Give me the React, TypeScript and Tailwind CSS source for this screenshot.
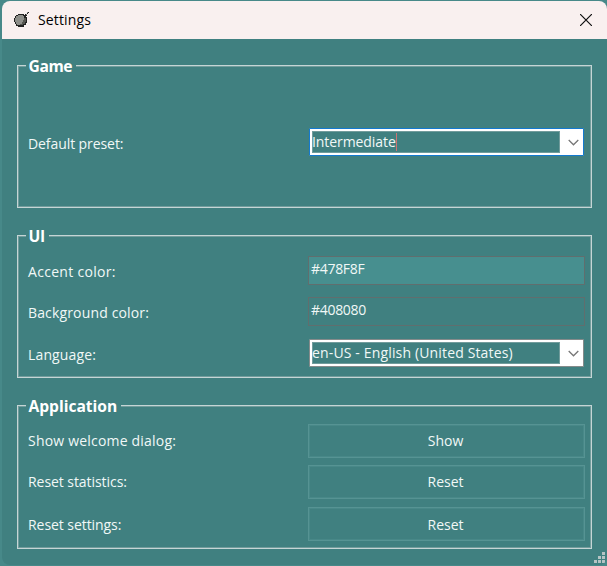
import type { ReactNode } from "react";

function Group({ title, tracking, className, children }: { title: string; tracking: string; className: string; children: ReactNode }) {
  return (
    <section
      className={`relative flex w-[575px] flex-col border border-[#c5d5d5] pl-[10px] pr-[6px] shadow-[inset_0_0_0_1px_#719c9c] ${className}`}
    >
      <h2
        className={`absolute -top-[11px] left-2 h-[22px] bg-[#408080] pl-[2.5px] pr-1 text-[15.6px] leading-[22px] font-bold whitespace-nowrap text-white ${tracking}`}
      >
        {title}
      </h2>
      {children}
    </section>
  );
}

function Row({ label, text, className, children }: { label: string; text: string; className: string; children: ReactNode }) {
  return (
    <div className={`flex items-center ${className}`}>
      <label className={`w-[280px] shrink-0 text-[14px] leading-5 whitespace-nowrap ${text}`}>{label}</label>
      {children}
    </div>
  );
}

function Combo({ value, focused }: { value: string; focused?: boolean }) {
  return (
    <div
      className={`ml-px flex h-7 w-[275px] rounded-[1px] border bg-white py-[2px] pl-[2px] ${focused ? "border-[#1479cf]" : "border-[#858b8b]"}`}
    >
      <div className="flex h-[22px] w-[248px] items-center border border-[#719c9c] bg-[#408080]">
        <span
          className={`-ml-px text-[14px] leading-5 whitespace-nowrap ${focused ? "-mt-px tracking-[-0.08px]" : "tracking-[0.15px]"}`}
        >
          {value}
        </span>
        {focused && <i className="h-[18px] w-px bg-[#cb7474]" />}
      </div>
      <svg className="mt-[8px] ml-[8px] h-[7px] w-[11px]" viewBox="0 0 11 7" fill="none" stroke="#777" strokeWidth="1.3">
        <path d="M.7 1 5.5 5.8 10.3 1" />
      </svg>
    </div>
  );
}

function Field({ value, className }: { value: string; className: string }) {
  return (
    <div className={`h-[29px] w-[277px] border border-[#606e6e] pl-[2px] text-[14px] leading-[23px] tracking-[-0.3px] ${className}`}>
      {value}
    </div>
  );
}

function Button({ className = "", children }: { className?: string; children: ReactNode }) {
  return (
    <button
      className={`h-[34px] w-[277px] border border-[#569393] pr-[2px] text-center text-[14px] leading-5 shadow-[inset_0_0_0_1px_#488888] ${className}`}
    >
      {children}
    </button>
  );
}

export default function App() {
  return (
    <main className="h-[566px] w-[607px] overflow-hidden bg-[#478989] pt-px pl-[2px] font-['Open_Sans','Noto_Sans',sans-serif] text-[#f1f8f7]">
      <div className="relative h-[564px] w-[605px] overflow-hidden rounded-lg bg-[#408080]">
        <header className="flex h-[38px] items-center bg-[#f9f0ef] text-black">
          <svg className="ml-3 h-4 w-4" viewBox="0 0 16 16" shapeRendering="crispEdges">
            <path fill="#20201f" d="M4 2h6v1h2v2h1v6h-1v2h-2v2H4v-1H2v-2H1v-2H0V6h1V4h1V3h2z" />
            <path fill="#8d8e89" d="M4 3h5v1h1v4H9v2H8v2H6v1H3v-1H2v-2H1V6h1V4h2z" />
            <path fill="#555650" d="M10 6h2v4h-1v2H9v1H6v-1h2v-2h1V8h1z" />
            <path fill="#20201f" d="M10 3h1V2h1v1h1v1h-1v1h-2zM13 1h1v1h-1zM14 0h1v1h-1z" />
            <path fill="#8d8e89" d="M12 2h1v1h-1zM13 0h1v1h-1z" />
          </svg>
          <span className="ml-2 text-[14px] leading-5 tracking-[0.15px]">Settings</span>
          <svg className="mr-[15px] ml-auto h-3 w-3" viewBox="0 0 12 12" stroke="#111" strokeWidth="1.2">
            <path d="m0 0 12 12M12 0 0 12" />
          </svg>
        </header>
        <div className="flex flex-col gap-[27px] pt-[26px] pl-[15px]">
          <Group title="Game" tracking="tracking-[-0.4px]" className="h-[143px] pt-[62px]">
            <Row label="Default preset:" text="pt-[3px] tracking-[-0.08px]" className="h-7">
              <Combo value="Intermediate" focused />
            </Row>
          </Group>
          <Group title="UI" tracking="tracking-[-0.2px]" className="h-[143px] pt-[20px]">
            <Row label="Accent color:" text="pt-[2px] tracking-[0.3px]" className="h-[29px]">
              <Field value="#478F8F" className="bg-[#478f8f]" />
            </Row>
            <Row label="Background color:" text="pt-[2px] tracking-[0.15px]" className="mt-3 h-[29px]">
              <Field value="#408080" className="bg-[#408080]" />
            </Row>
            <Row label="Language:" text="pt-[3px] tracking-[0.15px]" className="mt-[13px] h-7">
              <Combo value="en-US - English (United States)" />
            </Row>
          </Group>
          <Group title="Application" tracking="tracking-[-0.02px]" className="h-[144px] pt-[18px]">
            <Row label="Show welcome dialog:" text="tracking-[0.2px]" className="h-[34px]">
              <Button>Show</Button>
            </Row>
            <Row label="Reset statistics:" text="tracking-[-0.06px]" className="mt-[7px] h-[34px]">
              <Button>Reset</Button>
            </Row>
            <Row label="Reset settings:" text="pt-px tracking-[-0.06px]" className="mt-2 h-[34px]">
              <Button className="pt-[2px]">Reset</Button>
            </Row>
          </Group>
        </div>
        <svg className="absolute right-[2px] bottom-[2px] h-[11px] w-[11px]" viewBox="0 0 11 11" fill="#b5c4c4" shapeRendering="crispEdges">
          <path d="M8 0h3v3H8zM4 4h3v3H4zM8 4h3v3H8zM0 8h3v3H0zM4 8h3v3H4zM8 8h3v3H8z" />
        </svg>
      </div>
    </main>
  );
}
